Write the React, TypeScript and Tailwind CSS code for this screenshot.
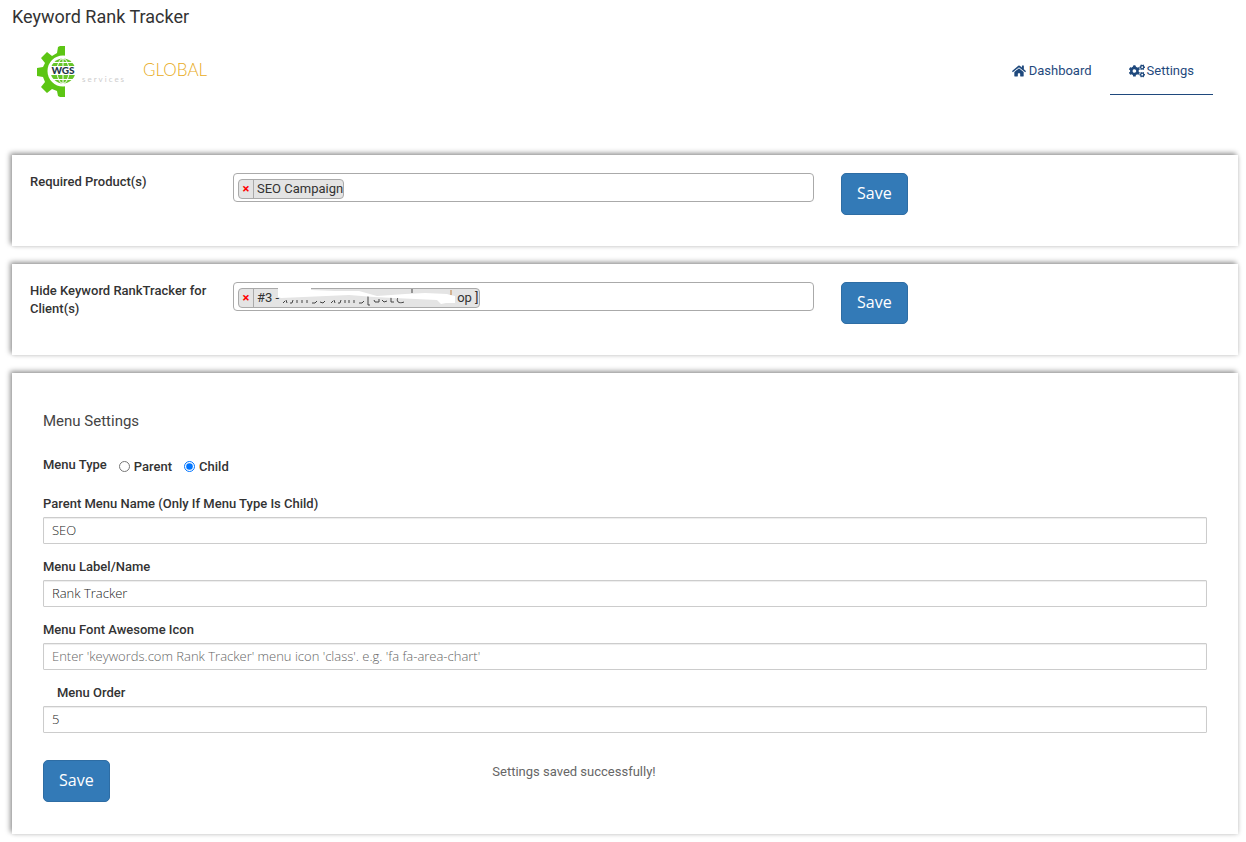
import { useState } from 'react';
import { FaCogs, FaHome } from 'react-icons/fa';

const card =
  'bg-white shadow-[-2px_-2px_5px_rgba(0,0,0,0.4),1px_1px_4px_rgba(0,0,0,0.1)]';

const fields = [
  { id: 'parent-name', label: 'Parent Menu Name (Only If Menu Type Is Child)', value: 'SEO' },
  { id: 'menu-label', label: 'Menu Label/Name', value: 'Rank Tracker' },
  {
    id: 'menu-icon',
    label: 'Menu Font Awesome Icon',
    value: '',
    placeholder: "Enter 'keywords.com Rank Tracker' menu icon 'class'. e.g. 'fa fa-area-chart'",
  },
  { id: 'menu-order', label: 'Menu Order', value: '5', indent: true },
];

function SaveButton() {
  return (
    <button
      type="submit"
      className="h-[42px] rounded-[5px] border border-[#2e6da4] bg-[#337ab7] px-[15px] pb-0.5 font-['Open_Sans',sans-serif] text-base text-white hover:bg-[#286090]"
    >
      Save
    </button>
  );
}

function Logo() {
  return (
    <a href="#home" aria-label="WGS Global services" className="flex items-center">
      <svg width="42" height="54" viewBox="0 0 42 54">
        {/* Gear half */}
        <path
          fill="#5cc514"
          d="M29 2h-5l-2 1-1 6-5 3-5-4-6 6 4 5-2 4-6 1v8l6 1 2 5-4 5 6 6 5-4 5 2 1 5 2 1h5z"
        />
        <circle cx="27" cy="27" r="15.5" fill="#fff" />
        {/* Globe */}
        <circle cx="27" cy="27" r="12.5" fill="#67c52a" />
        <g fill="none" stroke="#fff" strokeWidth="1">
          <ellipse cx="27" cy="27" rx="6" ry="12.5" />
          <path d="M27 14v26M16 18.500h22M16 35.500h22" />
        </g>
        <path fill="#fff" d="M13 22h28v9H13z" />
        <text
          x="27"
          y="30"
          textAnchor="middle"
          fill="#26374a"
          className="font-['Lato',sans-serif] text-[10px] font-black"
        >
          WGS
        </text>
      </svg>
      <span className="mt-4 ml-1 w-[61px] font-['Lato',sans-serif] text-[8px] leading-3 tracking-[2px] text-[#ccc]">
        services
      </span>
      <span className="pb-0.5 font-['Lato',sans-serif] text-[17px] leading-5 font-light text-[#e8ab1c]">
        GLOBAL
      </span>
    </a>
  );
}

function Tag({ children }: { children: React.ReactNode }) {
  return (
    <span className="mt-0.5 flex h-5 items-center rounded-[4px] border border-[#aaa] bg-[#e4e4e4] text-[13px] text-[#333]">
      <button
        type="button"
        aria-label="Remove"
        className="h-full w-[15px] border-r border-[#aaa] text-[13px] leading-none font-bold text-[#f00]"
      >
        ×
      </button>
      <span className="flex items-center pl-[3px] whitespace-pre">{children}</span>
    </span>
  );
}

function TagRow({ label, children }: { label: string; children: React.ReactNode }) {
  return (
    <form
      className={`${card} flex h-[91px] items-start pt-[18px] pl-[18px]`}
      onSubmit={(e) => e.preventDefault()}
    >
      <div className="w-[203px] pr-6 text-[13px] leading-[18px] font-medium">{label}</div>
      <div className="mr-[27px] flex h-[29px] w-[48.1%] items-center rounded-[4px] border border-[#aaa] px-1">
        {children}
      </div>
      <SaveButton />
    </form>
  );
}

export default function App() {
  const [menuType, setMenuType] = useState('Child');

  return (
    <div className="bg-white pr-2 pb-2 pl-3 font-['Roboto',sans-serif] text-[#333]">
      <h1 className="pt-1 text-lg leading-[26px]">Keyword Rank Tracker</h1>

      {/* Header */}
      <header className="flex items-start justify-between pt-3.5 pr-[25px] pl-6">
        <Logo />
        <nav className="flex text-[13px] text-[#1f497d]">
          <a href="#dashboard" className="flex h-[51px] items-center gap-[3px] px-[18px] pt-[3px]">
            <FaHome size={14} />
            Dashboard
          </a>
          <a
            href="#settings"
            className="flex h-[51px] items-center gap-0.5 border-b border-[#1f497d] px-[19px] pt-[3px]"
          >
            <FaCogs size={16} />
            Settings
          </a>
        </nav>
      </header>

      <main className="mt-[57px] flex flex-col gap-[18px]">
        <TagRow label="Required Product(s)">
          <Tag>SEO Campaign</Tag>
        </TagRow>

        <TagRow label="Hide Keyword RankTracker for Client(s)">
          <Tag>
            #3 -
            {/* Masked client name and email */}
            <svg width="178" height="20" viewBox="0 0 178 20" className="overflow-visible">
              <g fill="none" stroke="#444" strokeWidth="1">
                <path d="M4 15l2-2M7 12l1 3M11 15h2l1-3M18 12v3M23 12v3M28 12v3M33 15h3l2-2M41 14l3 1 2-2M52 15l2-2M55 12l1 3M59 15h2l1-3M66 12v3M70 12v3M75 12v3M80 15h3l2-2" />
                <path d="M89 8v9h2M95 12l1 2h4v-3M103 12l2 2 3-1M112 8v6l3 0M119 9c-3 7 4 6 6 5M133 1v4" />
                <path stroke="#c08040" d="M172 2v5" />
              </g>
              <path
                fill="#fff"
                d="M-1 -1h33v3l24 1 24 0 18 5 28-2 20-1 22 1 3 1 5 1v7h-9l-5 1-4-4-43-2-20-1-25-2-68 3-3-1z"
              />
            </svg>
            op ]
          </Tag>
        </TagRow>

        {/* Menu settings */}
        <form
          className={`${card} px-[31px] pt-[38px] pb-8`}
          onSubmit={(e) => e.preventDefault()}
        >
          <h2 className="text-[15px] leading-5 text-[#444]">Menu Settings</h2>

          <fieldset className="mt-6 flex text-[13px] leading-[18px] font-medium">
            <legend className="float-left mt-px mr-3">Menu Type</legend>
            {['Parent', 'Child'].map((type) => (
              <label key={type} className="mt-[3px] mr-3 flex items-center gap-1">
                <input
                  type="radio"
                  name="menu-type"
                  className="mb-0.5 size-[11px]"
                  checked={menuType === type}
                  onChange={() => setMenuType(type)}
                />
                {type}
              </label>
            ))}
          </fieldset>

          <div className="mt-[19px] flex flex-col gap-3.5">
            {fields.map((field) => (
              <div key={field.id}>
                <label
                  htmlFor={field.id}
                  className={`mb-1 block text-[13px] leading-[18px] font-medium ${field.indent ? 'pl-3.5' : ''}`}
                >
                  {field.label}
                </label>
                <input
                  id={field.id}
                  type="text"
                  defaultValue={field.value}
                  placeholder={field.placeholder}
                  className="block h-[27px] w-full rounded-[1px] border border-[#ccc] px-2 pb-0.5 font-['Open_Sans',sans-serif] text-[13px] font-light text-[#222] shadow-[inset_0_1px_1px_rgba(0,0,0,0.075)] placeholder:text-[#666]"
                />
              </div>
            ))}
          </div>

          <div className="mt-[27px] flex items-start">
            <div className="w-[38.6%]">
              <SaveButton />
            </div>
            <p className="pt-0.5 text-[13px] leading-5 text-[#666]">Settings saved successfully!</p>
          </div>
        </form>
      </main>
    </div>
  );
}
